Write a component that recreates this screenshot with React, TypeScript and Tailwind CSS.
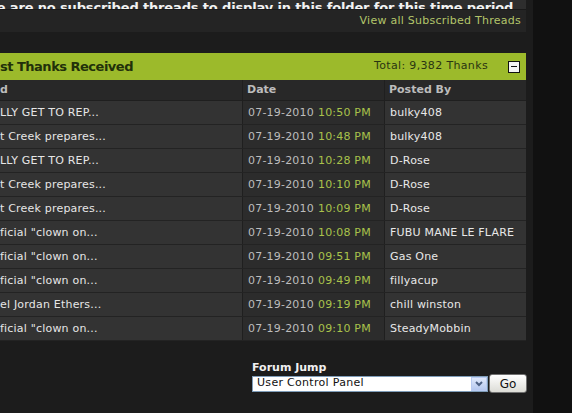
const rows = [
  { title: "LLY GET TO REP...", time: "10:50 PM", by: "bulky408" },
  { title: "t Creek prepares...", time: "10:48 PM", by: "bulky408" },
  { title: "LLY GET TO REP...", time: "10:28 PM", by: "D-Rose" },
  { title: "t Creek prepares...", time: "10:10 PM", by: "D-Rose" },
  { title: "t Creek prepares...", time: "10:09 PM", by: "D-Rose" },
  { title: 'ficial "clown on...', time: "10:08 PM", by: "FUBU MANE LE FLARE" },
  { title: 'ficial "clown on...', time: "09:51 PM", by: "Gas One" },
  { title: 'ficial "clown on...', time: "09:49 PM", by: "fillyacup" },
  { title: "el Jordan Ethers...", time: "09:19 PM", by: "chill winston" },
  { title: 'ficial "clown on...', time: "09:10 PM", by: "SteadyMobbin" },
];

const ThanksRow = ({ title, time, by }: { title: string; time: string; by: string }) => {
  return (
    <div className="flex h-[24px] border-b border-[#232323] text-[11px] tracking-[0.2px]">
      <div className="w-[242px] flex items-center pt-[1px] bg-[#333333] text-[#e6e6e6] whitespace-nowrap overflow-hidden">
        {title}
      </div>
      <div className="w-[142px] flex items-center pt-[1px] border-l border-[#1f1f1f] bg-[#2c2c2c] pl-[5px] whitespace-nowrap">
        <span className="text-[#bdbdbd]">07-19-2010</span>
        <span className="ml-[4px] text-[#a9c24b]">{time}</span>
      </div>
      <div className="flex-1 flex items-center pt-[1px] border-l border-[#1f1f1f] bg-[#333333] pl-[5px] text-[#e8e8e8] whitespace-nowrap">
        {by}
      </div>
    </div>
  );
};

export default function App() {
  return (
    <div className="w-[572px] h-[413px] flex bg-[#111111] overflow-hidden font-['DejaVu_Sans',Verdana,sans-serif]">
      <div className="w-[533px] bg-[#1c1c1c] flex flex-col">
        <div className="w-[526px] flex flex-col">
          {/* no threads notice, scrolled half off the top */}
          <div className="h-[10px] shrink-0 bg-[#2e2e2e] border-b border-[#1a1a1a] flex justify-end items-end overflow-hidden pr-[8px]">
            <span className="whitespace-nowrap text-[13px] font-bold tracking-[-0.15px] leading-[13px] mb-[-5px] text-[#f2f2f2]">
              There are no subscribed threads to display in this folder for this time period.
            </span>
          </div>
          <div className="h-[22px] shrink-0 bg-[#242424] flex justify-end items-center pr-[5px] text-[11px] tracking-[0.25px] text-[#b3c46a]">
            View all Subscribed Threads
          </div>
          <div className="h-[21px] shrink-0 bg-[#1c1c1c]" />

          {/* latest thanks box */}
          <div className="h-[27px] shrink-0 bg-[#9cba2b] flex items-center">
            <span className="flex-1 whitespace-nowrap text-[13px] font-bold tracking-[-0.5px] text-[#22300a]">st Thanks Received</span>
            <span className="text-[11px] tracking-[0.35px] text-[#2a3512]">Total: 9,382 Thanks</span>
            <button className="ml-[20px] mr-[6px] w-[12px] h-[12px] bg-[#f4f4f4] border border-[#111] flex items-center justify-center">
              <span className="block w-[6px] h-[1px] bg-[#111]" />
            </button>
          </div>
          <div className="flex h-[21px] shrink-0 border-b border-[#1f1f1f] bg-[#282828] text-[11px] font-bold text-[#bcbcbc]">
            <div className="w-[242px] flex items-center pt-[1px]">d</div>
            <div className="w-[142px] flex items-center pt-[1px] border-l border-[#1f1f1f] pl-[4px]">Date</div>
            <div className="flex-1 flex items-center pt-[1px] border-l border-[#1f1f1f] pl-[4px]">Posted By</div>
          </div>
          {rows.map((r, i) => (
            <ThanksRow key={i} {...r} />
          ))}
        </div>

        {/* forum jump */}
        <div className="ml-[252px] mt-[20px] flex flex-col">
          <div className="text-[11px] font-bold leading-[13px] text-[#f0f0f0]">Forum Jump</div>
          <div className="flex items-center">
            <div className="w-[236px] h-[16px] bg-white border border-[#7f9db9] flex items-center">
              <span className="flex-1 pl-[4px] text-[11px] tracking-[0.3px] text-[#111] whitespace-nowrap">User Control Panel</span>
              <span className="w-[16px] h-[14px] bg-gradient-to-b from-[#dfe8fb] to-[#b6c8ef] border border-[#b9cbf2] flex items-center justify-center">
                <svg width="8" height="6" viewBox="0 0 8 6">
                  <path d="M1 1 L4 4 L7 1" fill="none" stroke="#4d6185" strokeWidth="2" />
                </svg>
              </span>
            </div>
            <button className="ml-[1px] w-[38px] h-[19px] rounded-[3px] border border-[#707070] bg-gradient-to-b from-[#ffffff] to-[#dcdcd6] text-[12px] leading-none text-[#111]">
              Go
            </button>
          </div>
        </div>
      </div>
    </div>
  );
}
